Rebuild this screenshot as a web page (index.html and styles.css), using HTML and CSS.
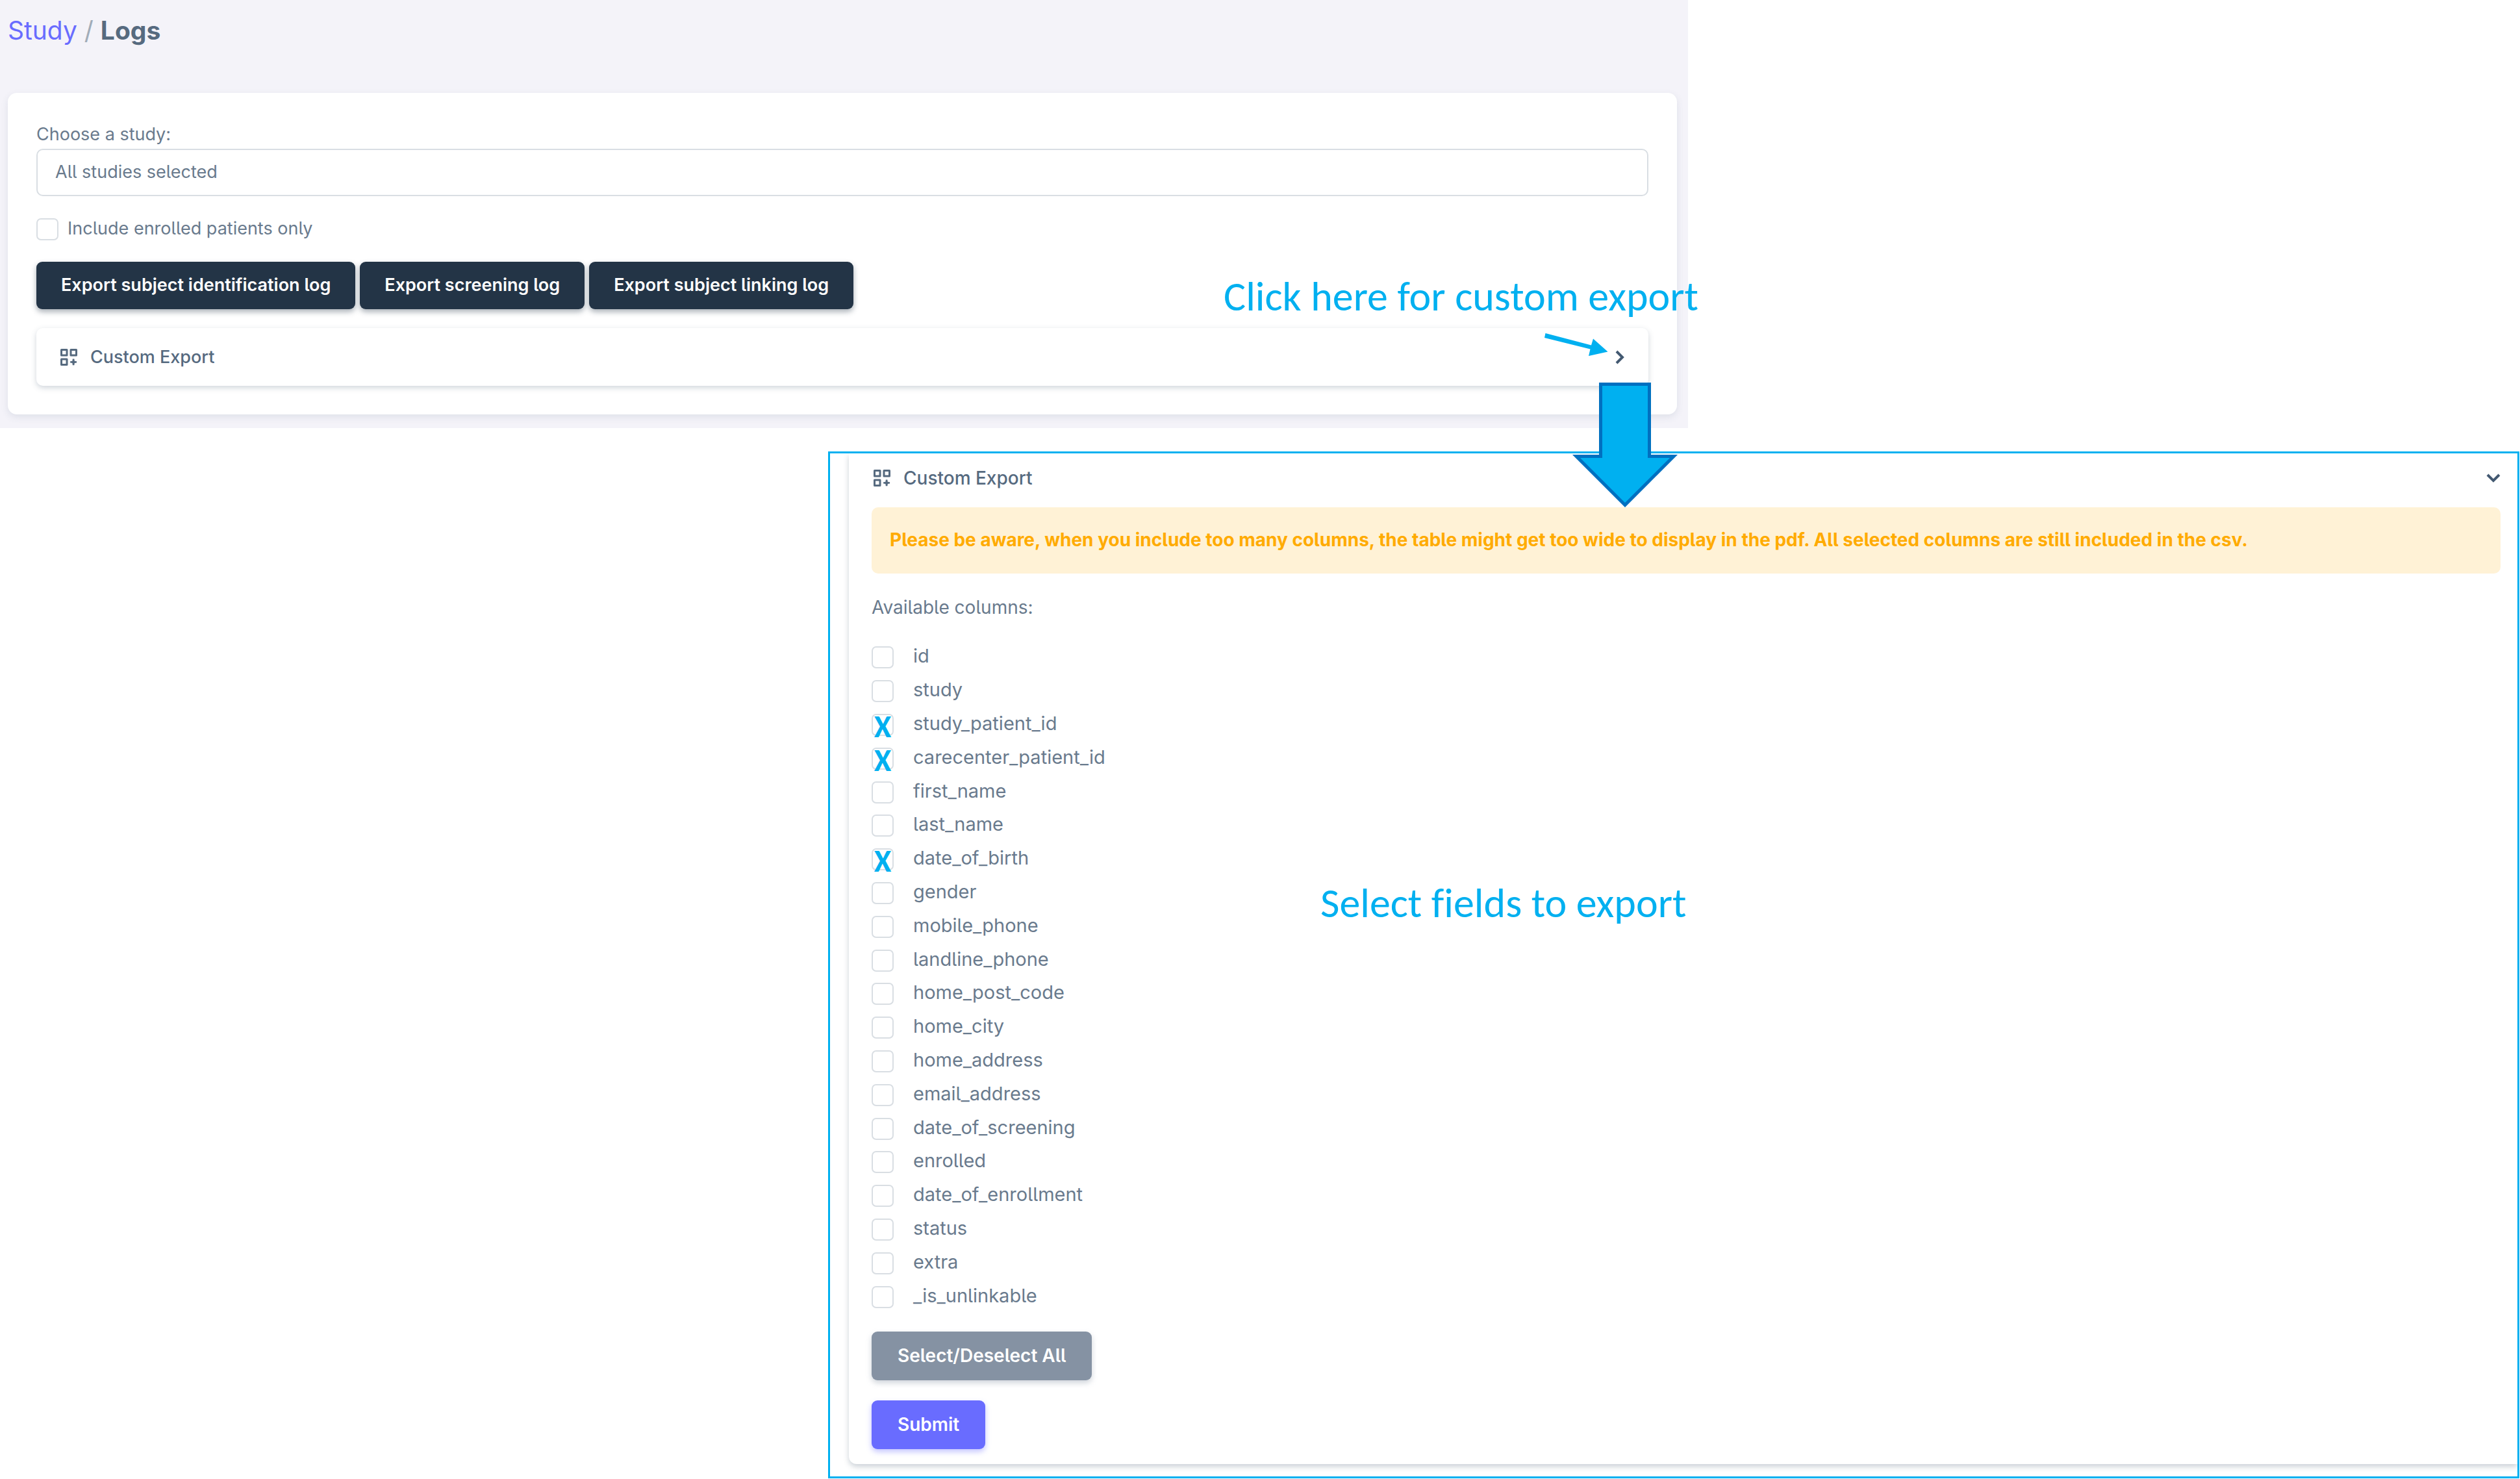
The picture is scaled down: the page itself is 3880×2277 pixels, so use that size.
FILE: index.html
```html
<!DOCTYPE html>
<html lang="en">
<head>
<meta charset="utf-8">
<meta name="viewport" content="width=device-width, initial-scale=1">
<title>Study / Logs</title>
<link rel="stylesheet" href="styles.css">
</head>
<body>
<svg class="sprite" aria-hidden="true">
  <symbol id="customize" viewBox="0 0 26 26">
    <path fill="none" stroke="currentColor" stroke-width="3" stroke-linejoin="round" d="M1.5 1.5h8.500v8.500h-8.500zM16 1.500h8.500v8.500h-8.500zM1.500 16h8.500v8.500h-8.500z"/>
    <path fill="currentColor" d="M18.8 15.5h2.6l.4 3.3 3.3.4v2.4l-3.3.4-.4 3.3h-2.6l-.4-3.3-3.3-.4v-2.4l3.3-.4z"/>
  </symbol>
</svg>

<main class="page">
  <section class="logs">
    <nav class="breadcrumb" aria-label="Breadcrumb">
      <a href="#">Study</a> <span class="slash">/</span> <strong>Logs</strong>
    </nav>
    <div class="card">
      <label class="field-label" for="study">Choose a study:</label>
      <input class="field" id="study" type="text" value="All studies selected">
      <div class="enrolled">
        <input class="box" type="checkbox" id="only-enrolled">
        <label for="only-enrolled">Include enrolled patients only</label>
      </div>
      <div class="exports">
        <button class="btn dark" type="button">Export subject identification log</button>
        <button class="btn dark" type="button">Export screening log</button>
        <button class="btn dark" type="button">Export subject linking log</button>
      </div>
      <button class="toggle closed" type="button" aria-expanded="false">
        <svg class="icon" aria-hidden="true"><use href="#customize"/></svg>
        <span>Custom Export</span>
        <svg class="chevron-right" viewBox="0 0 14 22" aria-hidden="true"><path d="M2 2l9 9-9 9"/></svg>
      </button>
    </div>
    <p class="note click-note">Click here for custom export</p>
    <svg class="small-arrow" viewBox="0 0 98 36" aria-hidden="true"><path d="M1.500 0L72 18.500 75 8.500 97.500 28.500 68 35 70.500 24.500 0 7z"/></svg>
    <svg class="big-arrow" viewBox="0 0 164 192" aria-hidden="true"><path d="M44.500 2.500h75v111h37.500L82 188.500 7 113.500h37.500z"/></svg>
  </section>

  <section class="custom">
    <form class="sheet">
      <button class="toggle open" type="button" aria-expanded="true">
        <svg class="icon" aria-hidden="true"><use href="#customize"/></svg>
        <span>Custom Export</span>
        <svg class="chevron-down" viewBox="0 0 22 14" aria-hidden="true"><path d="M2 2l9 9 9-9"/></svg>
      </button>
      <p class="alert">Please be aware, when you include too many columns, the table might get too wide to display in the pdf. All selected columns are still included in the csv.</p>
      <p class="available">Available columns:</p>
      <ul class="columns">
        <li><span class="tick"><input class="box" type="checkbox" id="c1"></span><label for="c1">id</label></li>
        <li><span class="tick"><input class="box" type="checkbox" id="c2"></span><label for="c2">study</label></li>
        <li><span class="tick"><input class="box" type="checkbox" id="c3" checked><span class="mark">X</span></span><label for="c3">study_patient_id</label></li>
        <li><span class="tick"><input class="box" type="checkbox" id="c4" checked><span class="mark">X</span></span><label for="c4">carecenter_patient_id</label></li>
        <li><span class="tick"><input class="box" type="checkbox" id="c5"></span><label for="c5">first_name</label></li>
        <li><span class="tick"><input class="box" type="checkbox" id="c6"></span><label for="c6">last_name</label></li>
        <li><span class="tick"><input class="box" type="checkbox" id="c7" checked><span class="mark">X</span></span><label for="c7">date_of_birth</label></li>
        <li><span class="tick"><input class="box" type="checkbox" id="c8"></span><label for="c8">gender</label></li>
        <li><span class="tick"><input class="box" type="checkbox" id="c9"></span><label for="c9">mobile_phone</label></li>
        <li><span class="tick"><input class="box" type="checkbox" id="c10"></span><label for="c10">landline_phone</label></li>
        <li><span class="tick"><input class="box" type="checkbox" id="c11"></span><label for="c11">home_post_code</label></li>
        <li><span class="tick"><input class="box" type="checkbox" id="c12"></span><label for="c12">home_city</label></li>
        <li><span class="tick"><input class="box" type="checkbox" id="c13"></span><label for="c13">home_address</label></li>
        <li><span class="tick"><input class="box" type="checkbox" id="c14"></span><label for="c14">email_address</label></li>
        <li><span class="tick"><input class="box" type="checkbox" id="c15"></span><label for="c15">date_of_screening</label></li>
        <li><span class="tick"><input class="box" type="checkbox" id="c16"></span><label for="c16">enrolled</label></li>
        <li><span class="tick"><input class="box" type="checkbox" id="c17"></span><label for="c17">date_of_enrollment</label></li>
        <li><span class="tick"><input class="box" type="checkbox" id="c18"></span><label for="c18">status</label></li>
        <li><span class="tick"><input class="box" type="checkbox" id="c19"></span><label for="c19">extra</label></li>
        <li><span class="tick"><input class="box" type="checkbox" id="c20"></span><label for="c20">_is_unlinkable</label></li>
      </ul>
      <div class="actions">
        <button class="btn secondary" type="button">Select/Deselect All</button>
        <button class="btn primary" type="submit">Submit</button>
      </div>
    </form>
    <p class="note select-note">Select fields to export</p>
  </section>
</main>
</body>
</html>
```
FILE: styles.css
```css
* { box-sizing: border-box; }

body {
  margin: 0;
  background: #fff;
  color: #697a8d;
  font-family: Inter, "Liberation Sans", sans-serif;
  font-feature-settings: "cv05";
  font-size: 27px;
}

p, ul { margin: 0; padding: 0; }
button, input { font: inherit; font-feature-settings: inherit; color: inherit; margin: 0; }
.sprite { display: none; }

.page { display: flex; flex-direction: column; }

/* Study logs panel */
.logs {
  position: relative;
  z-index: 1;
  margin-right: 1281px;
  padding: 16px 17px 21px 12px;
  background: #f4f3f9;
}

.breadcrumb { font-size: 39px; line-height: 62px; margin-bottom: 65px; }
.breadcrumb a { color: #696cff; text-decoration: none; }
.breadcrumb strong { color: #566a7f; font-weight: 700; }
.slash { color: #a1acb8; }

.card {
  display: flex;
  flex-direction: column;
  padding: 42px 44px 44px;
  border-radius: 14px;
  background: #fff;
  box-shadow: 0 4px 12px rgba(67, 89, 113, .12);
}

.field-label { line-height: 44px; }
.field {
  height: 73px;
  padding: 0 27px 2px;
  border: 2px solid #d9dee3;
  border-radius: 10px;
  background: #fff;
}

.enrolled { display: flex; align-items: center; gap: 14px; margin: 34px 0 33px; }
.enrolled label { line-height: 30px; padding-bottom: 3px; }

.box {
  appearance: none;
  display: block;
  flex: none;
  width: 34px;
  height: 34px;
  border: 2px solid #d9dee3;
  border-radius: 7px;
  background: #fff;
}

.exports { display: flex; gap: 7px; }
.btn {
  height: 73px;
  padding: 0 38px 2px;
  border: 0;
  border-radius: 9px;
  color: #fff;
  font-weight: 600;
}
.dark { background: #233446; box-shadow: 0 4px 8px rgba(35, 52, 70, .4); }

.toggle {
  display: flex;
  align-items: center;
  border: 0;
  background: #fff;
  color: #566a7f;
  font-weight: 500;
  text-align: left;
}
.toggle span { flex: 1; }
.icon { width: 26px; height: 26px; margin-right: 20px; }
.closed {
  height: 89px;
  margin-top: 29px;
  padding: 0 37px;
  border-radius: 10px;
  box-shadow: 0 3px 8px rgba(67, 89, 113, .25);
}
.chevron-right { width: 14px; height: 22px; }
.chevron-down { width: 22px; height: 14px; }
.chevron-right path, .chevron-down path { fill: none; stroke: #435971; stroke-width: 4; }

/* Annotations drawn over the panels */
.note {
  position: absolute;
  color: #00b0f0;
  font-family: Carlito, Lato, sans-serif;
  font-size: 64px;
  font-variant-ligatures: none;
  line-height: 64px;
  white-space: nowrap;
}
.click-note { top: 424px; right: -16px; }
.select-note { top: 660px; left: 755px; }
.small-arrow { position: absolute; top: 513px; right: 123px; width: 98px; height: 36px; fill: #00b0f0; }
.big-arrow {
  position: absolute;
  top: 589px;
  right: 15px;
  width: 164px;
  height: 192px;
  fill: #00b0f0;
  stroke: #0070c0;
  stroke-width: 5;
}

/* Expanded custom export panel */
.custom {
  position: relative;
  margin: 36px 1px 0 1275px;
  padding: 0 0 19px 29px;
  border: 3px solid #00b0f0;
  background: #fff;
  overflow: hidden;
  font-size: 28px;
}
.sheet {
  padding: 0 26px 23px 35px;
  border-radius: 0 0 0 12px;
  box-shadow: 0 4px 9px rgba(67, 89, 113, .28);
}
.open { width: 100%; height: 76px; margin-bottom: 7px; padding: 0 0 0 3px; }
.alert {
  padding: 29px 28px 31px;
  border-radius: 10px;
  background: #fff2d6;
  color: #ffab00;
  font-weight: 700;
  line-height: 42px;
}
.available { margin: 31px 0 30px; line-height: 42px; }

.columns { list-style: none; font-size: 29px; }
.columns li { display: flex; align-items: center; gap: 30px; height: 52px; }
.columns li:nth-child(5n) { height: 51px; }
.columns label { line-height: 34px; padding-bottom: 4px; }
.tick { position: relative; }
.mark {
  position: absolute;
  inset: -4px 0 0;
  color: #00b0f0;
  font-family: Carlito, Lato, sans-serif;
  font-size: 48px;
  font-weight: 700;
  line-height: 48px;
  text-align: center;
  pointer-events: none;
}

.actions { display: flex; flex-direction: column; align-items: flex-start; gap: 31px; margin-top: 28px; }
.actions .btn { height: 75px; padding: 0 40px 2px; }
.secondary { background: #8592a3; box-shadow: 0 4px 8px rgba(133, 146, 163, .4); }
.primary { background: #696cff; box-shadow: 0 4px 8px rgba(105, 108, 255, .4); }
```
